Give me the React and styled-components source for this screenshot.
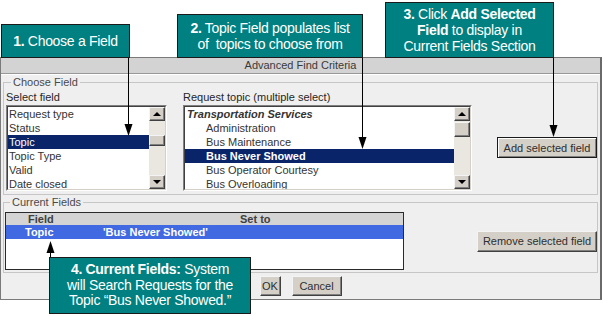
import React from 'react'
import styled, { createGlobalStyle } from 'styled-components'

const GlobalStyle = createGlobalStyle`
  html, body {
    margin: 0;
    padding: 0;
    background: #fff;
  }
  body {
    font-family: "Liberation Sans", Arial, sans-serif;
  }
`

const Canvas = styled.div`
  position: relative;
  width: 603px;
  height: 316px;
  overflow: hidden;
  background: #fff;
  padding-top: 57px;
  box-sizing: border-box;
`

const Window = styled.div`
  width: 602px;
  height: 243px;
  box-sizing: border-box;
  border: 1px solid #7a7a7a;
  border-right: 2px solid #6a6a6a;
  background: #efefef;
  display: flex;
  flex-direction: column;
  font-size: 11px;
  color: #2a2a2a;
`

const TitleBar = styled.div`
  height: 15px;
  line-height: 15px;
  background: #d3d3d3;
  border-bottom: 1px solid #989898;
  text-align: center;
  color: #3a3a3a;
`

const Body = styled.div`
  flex: 1;
  border-top: 1px solid #fff;
  padding: 1px 2px 0 2px;
  display: flex;
  flex-direction: column;
`

const Group = styled.fieldset`
  margin: ${p => p.$gap || 0}px 0 0;
  padding: ${p => p.$padTop}px 0 ${p => p.$padBottom}px ${p => p.$padLeft}px;
  border: 1px solid #c6c6c6;
  min-width: 0;
`

const Legend = styled.legend`
  padding: 0 2px;
  margin-left: 5px;
  line-height: 13px;
  color: #4a4a4a;
`

const Row = styled.div`
  display: flex;
  align-items: ${p => p.$align || 'flex-start'};
`

const Column = styled.div`
  width: ${p => p.$width}px;
  margin-left: ${p => p.$offset || 0}px;
  display: flex;
  flex-direction: column;
`

const Label = styled.div`
  line-height: 13px;
  height: 13px;
  color: #262626;
  margin-bottom: 1px;
`

const ListBox = styled.div`
  height: 86px;
  box-sizing: border-box;
  border: 1px solid;
  border-color: #808080 #fff #fff #808080;
  background: #fff;
  display: flex;
`

const ListInner = styled.div`
  flex: 1;
  display: flex;
  border: 1px solid;
  border-color: #404040 #d4d0c8 #d4d0c8 #404040;
  overflow: hidden;
`

const Items = styled.div`
  flex: 1;
  overflow: hidden;
`

const Item = styled.div`
  height: 14px;
  line-height: 14px;
  padding-left: ${p => p.$indent || 1}px;
  white-space: nowrap;
  color: ${p => (p.$selected ? '#fff' : '#333')};
  background: ${p => (p.$selected ? '#0a246a' : 'transparent')};
  font-weight: ${p => (p.$heading || p.$strong ? 'bold' : 'normal')};
  font-style: ${p => (p.$heading ? 'italic' : 'normal')};
`

const ScrollBar = styled.div`
  width: 16px;
  display: flex;
  flex-direction: column;
  background: #e9e7e0;
`

const Track = styled.div`
  flex: 1;
  position: relative;
`

const BevelBox = styled.div`
  box-sizing: border-box;
  background: #d4d0c8;
  border: 1px solid;
  border-color: #f4f4f4 #404040 #404040 #f4f4f4;
  box-shadow: inset -1px -1px 0 #808080;
`

const ArrowButton = styled(BevelBox)`
  height: 14px;
  display: flex;
  align-items: center;
  justify-content: center;
`

const Thumb = styled(BevelBox)`
  position: absolute;
  left: 0;
  right: 0;
  top: ${p => p.$top}px;
  height: ${p => p.$height}px;
`

const Glyph = styled.span`
  width: 0;
  height: 0;
  border-left: 4px solid transparent;
  border-right: 4px solid transparent;
  ${p => (p.$down ? 'border-top: 4px solid #000;' : 'border-bottom: 4px solid #000;')}
`

const PushButton = styled.button`
  font: 11px "Liberation Sans", Arial, sans-serif;
  color: #2e2e2e;
  background: #d4d0c8;
  width: ${p => p.$width}px;
  height: ${p => p.$height || 21}px;
  margin-top: ${p => p.$top || 0}px;
  margin-left: ${p => p.$left || '0'};
  padding: 0;
  box-sizing: border-box;
  border: 1px solid;
  border-color: ${p => (p.$default ? '#1a1a1a' : '#f4f4f4 #404040 #404040 #f4f4f4')};
  box-shadow: ${p =>
    p.$default
      ? 'inset 1px 1px 0 #fff, inset -1px -1px 0 #808080'
      : 'inset -1px -1px 0 #808080'};
`

const Grid = styled.div`
  width: 399px;
  height: 58px;
  box-sizing: border-box;
  border: 1px solid #2a2a2a;
  background: #fff;
`

const GridRow = styled.div`
  display: grid;
  grid-template-columns: 97px 1fr;
  height: ${p => p.$height}px;
  line-height: ${p => p.$height}px;
  background: ${p => p.$bg};
  color: ${p => p.$color};
  font-weight: bold;
  white-space: nowrap;
`

const Cell = styled.div`
  padding-left: ${p => p.$pad || 0}px;
`

const Footer = styled.div`
  display: flex;
  justify-content: center;
  gap: 11px;
  padding-top: 3px;
`

const Callout = styled.div`
  position: absolute;
  left: ${p => p.$x}px;
  top: ${p => p.$y}px;
  width: ${p => p.$w}px;
  height: ${p => p.$h}px;
  box-sizing: border-box;
  background: #008080;
  border: 1px solid #1a1a1a;
  color: #fff;
  font: 14px/${p => p.$lh || 16}px "Liberation Sans", Arial, sans-serif;
  letter-spacing: -0.3px;
  text-align: center;
  display: flex;
  flex-direction: column;
  justify-content: center;
  align-items: center;
  white-space: nowrap;
`

const Overlay = styled.svg`
  position: absolute;
  left: 0;
  top: 0;
  pointer-events: none;
`

const ListScroll = ({ top, height }) => (
  <ScrollBar>
    <ArrowButton><Glyph /></ArrowButton>
    <Track><Thumb $top={top} $height={height} /></Track>
    <ArrowButton><Glyph $down /></ArrowButton>
  </ScrollBar>
)

const fields = ['Request type', 'Status', 'Topic', 'Topic Type', 'Valid', 'Date closed']
const topics = ['Administration', 'Bus Maintenance', 'Bus Never Showed', 'Bus Operator Courtesy', 'Bus Overloading']

const arrows = [
  { x: 128.5, from: 57, tip: 136 },
  { x: 362.5, from: 57, tip: 149 },
  { x: 553.5, from: 57, tip: 137 },
  { x: 50.5, from: 257, tip: 241 },
]

export default function App() {
  return (
    <>
      <GlobalStyle />
      <Canvas>
        <Window>
          <TitleBar>Advanced Find Criteria</TitleBar>
          <Body>
            <Group $padTop={2} $padBottom={3} $padLeft={2}>
              <Legend>Choose Field</Legend>
              <Row>
                <Column $width={161}>
                  <Label>Select field</Label>
                  <ListBox>
                    <ListInner>
                      <Items>
                        {fields.map(f => (
                          <Item key={f} $selected={f === 'Topic'}>{f}</Item>
                        ))}
                      </Items>
                      <ListScroll top={14} height={11} />
                    </ListInner>
                  </ListBox>
                </Column>
                <Column $width={289} $offset={16}>
                  <Label>Request topic (multiple select)</Label>
                  <ListBox>
                    <ListInner>
                      <Items>
                        <Item $heading $indent={2}>Transportation Services</Item>
                        {topics.map(t => {
                          const picked = t === 'Bus Never Showed'
                          return (
                            <Item key={t} $indent={21} $selected={picked} $strong={picked}>{t}</Item>
                          )
                        })}
                      </Items>
                      <ListScroll top={1} height={15} />
                    </ListInner>
                  </ListBox>
                </Column>
                <PushButton $default $width={100} $top={46} $left="25px">Add selected field</PushButton>
              </Row>
            </Group>
            <Group $gap={1} $padTop={3} $padBottom={2} $padLeft={1}>
              <Legend>Current Fields</Legend>
              <Row $align="center">
                <Grid>
                  <GridRow $height={12} $bg="#d4d4d4" $color="#404040">
                    <Cell $pad={22}>Field</Cell>
                    <Cell $pad={137}>Set to</Cell>
                  </GridRow>
                  <GridRow $height={14} $bg="#4169e1" $color="#fff">
                    <Cell $pad={19}>Topic</Cell>
                    <Cell>'Bus Never Showed'</Cell>
                  </GridRow>
                </Grid>
                <PushButton $width={120} $left="auto">Remove selected field</PushButton>
              </Row>
            </Group>
            <Footer>
              <PushButton $width={21} $height={20}>OK</PushButton>
              <PushButton $width={50} $height={20}>Cancel</PushButton>
            </Footer>
          </Body>
        </Window>

        <Overlay width="603" height="316">
          {arrows.map(a => {
            const up = a.tip < a.from
            const base = up ? a.tip + 12 : a.tip - 12
            return (
              <g key={a.x}>
                <line x1={a.x} y1={a.from} x2={a.x} y2={base} stroke="#000" strokeWidth="1" />
                <polygon points={`${a.x - 4},${base} ${a.x + 4},${base} ${a.x},${a.tip}`} fill="#000" />
              </g>
            )
          })}
        </Overlay>

        <Callout $x={1} $y={24} $w={129} $h={34}>
          <span><b>1.</b> Choose a Field</span>
        </Callout>
        <Callout $x={177} $y={14} $w={186} $h={44}>
          <span><b>2.</b> Topic Field populates list</span>
          <span>of&nbsp; topics to choose from</span>
        </Callout>
        <Callout $x={385} $y={2} $w={169} $h={56} $lh={16}>
          <span><b>3.</b> Click <b>Add Selected</b></span>
          <span><b>Field</b> to display in</span>
          <span>Current Fields Section</span>
        </Callout>
        <Callout $x={49} $y={257} $w={202} $h={57} $lh={15.5}>
          <span><b>4. Current Fields:</b> System</span>
          <span>will Search Requests for the</span>
          <span>Topic “Bus Never Showed.”</span>
        </Callout>
      </Canvas>
    </>
  )
}
